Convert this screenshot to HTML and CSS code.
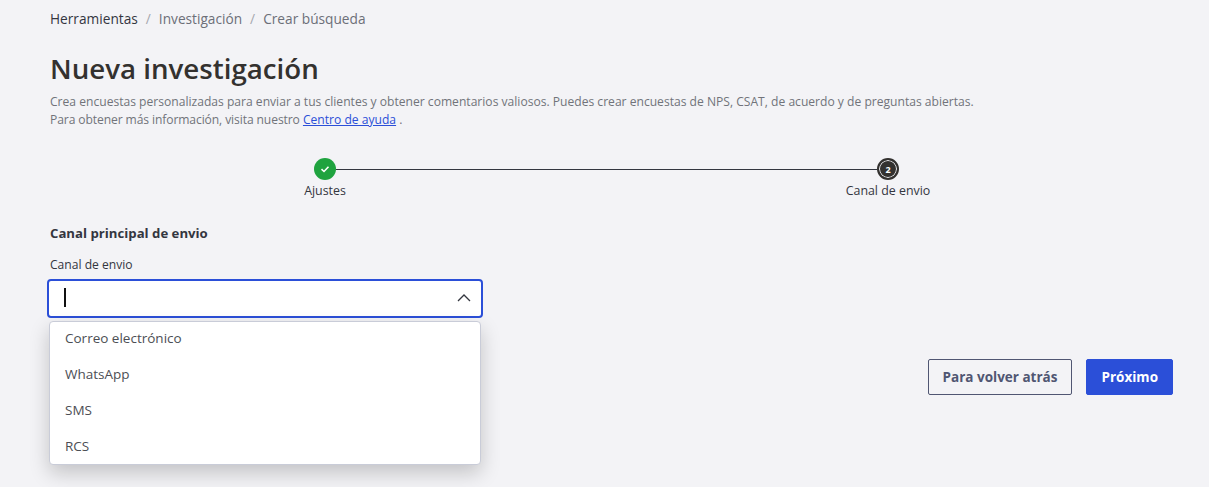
FILE: index.html
```html
<!DOCTYPE html>
<html lang="es">
<head>
  <meta charset="UTF-8" />
  <meta name="viewport" content="width=device-width, initial-scale=1.0"/>
  <title>Nueva investigación</title>
  <link rel="stylesheet" href="styles.css">
</head>
<body>

  <!-- Breadcrumb -->
  <nav class="breadcrumb">
    <a class="crumb-first" href="#">Herramientas</a>
    <span class="crumb-sep">/</span>
    <a href="#">Investigación</a>
    <span class="crumb-sep">/</span>
    <a href="#">Crear búsqueda</a>
  </nav>

  <!-- Header -->
  <h1>Nueva investigación</h1>
  <p class="intro">
    Crea encuestas personalizadas para enviar a tus clientes y obtener comentarios valiosos. Puedes crear encuestas de NPS, CSAT, de acuerdo y de preguntas abiertas.<br>
    <span class="intro-more">Para obtener más información, visita nuestro</span> <a href="#">Centro de ayuda</a> .
  </p>

  <!-- Stepper -->
  <div class="stepper">
    <div class="step">
      <span class="step-dot step-done">
        <svg width="10" height="10" viewBox="0 0 10 10"><path d="M1.5 5.2 4 7.5 8.5 2.8" fill="none" stroke="#fff" stroke-width="1.6"/></svg>
      </span>
      <span class="step-label">Ajustes</span>
    </div>
    <div class="step-line"></div>
    <div class="step">
      <span class="step-dot step-current">2</span>
      <span class="step-label">Canal de envio</span>
    </div>
  </div>

  <!-- Form -->
  <h2>Canal principal de envio</h2>
  <label class="field-label">Canal de envio</label>
  <div class="select">
    <div class="select-box">
      <span class="caret"></span>
      <svg class="chevron" width="14" height="8" viewBox="0 0 14 8"><path d="M1 7 7 1l6 6" fill="none" stroke="#33363f" stroke-width="1.3"/></svg>
    </div>
    <ul class="select-menu">
      <li>Correo electrónico</li>
      <li>WhatsApp</li>
      <li>SMS</li>
      <li>RCS</li>
    </ul>
  </div>

  <div class="actions">
    <button class="btn btn-outline" type="button">Para volver atrás</button>
    <button class="btn btn-primary" type="button">Próximo</button>
  </div>

</body>
</html>
```

FILE: styles.css
```css
* {
  box-sizing: border-box;
}

html, body {
  height: 100%;
}

body {
  margin: 0;
  padding: 0 36px 0 50px;
  overflow: hidden;
  font-family: 'Open Sans', 'Noto Sans', sans-serif;
  background-color: #f3f3f6;
  color: #33363f;
}

/* Breadcrumb */
.breadcrumb {
  display: flex;
  gap: 8px;
  height: 36px;
  align-items: center;
  font-size: 13.7px;
  color: #6c6f78;
}

.breadcrumb a {
  color: inherit;
  text-decoration: none;
}

.breadcrumb .crumb-first {
  color: #33363f;
}

.crumb-sep {
  color: #a5a7ae;
}

/* Header */
h1 {
  margin: 15px 0 0;
  font-size: 27.7px;
  line-height: 34px;
  font-weight: 600;
  color: #33312f;
}

.intro {
  margin: 8px 0 0;
  font-size: 12.1px;
  line-height: 18px;
  color: #71737a;
}

.intro-more {
  letter-spacing: -0.1px;
}

.intro a {
  color: #2b4fd8;
}

/* Stepper */
.stepper {
  display: flex;
  margin: 29px 0 0 225px;
  width: 663px;
}

.step {
  display: flex;
  flex-direction: column;
  align-items: center;
  width: 100px;
  flex: none;
  margin-right: -39px;
  margin-left: -39px;
}

.step:first-child {
  margin-left: 0;
}

.step:last-child {
  margin-right: 0;
}

.step-line {
  flex: 1;
  height: 1px;
  margin-top: 11px;
  background-color: #33363f;
}

.step-dot {
  display: flex;
  align-items: center;
  justify-content: center;
  width: 22px;
  height: 22px;
  border-radius: 50%;
}

.step-done {
  background-color: #1fa33f;
}

.step-current {
  background-color: #33312f;
  color: #fff;
  font-size: 9px;
  font-weight: 700;
  border: 2px solid #33312f;
  box-shadow: inset 0 0 0 1px #f3f3f6;
}

.step-label {
  margin-top: 1px;
  font-size: 12.4px;
  font-weight: 500;
  line-height: 20px;
  white-space: nowrap;
}

/* Form */
h2 {
  margin: 22px 0 0;
  font-size: 13.2px;
  line-height: 20px;
  font-weight: 700;
  color: #33363f;
}

.field-label {
  display: block;
  margin-top: 12px;
  font-size: 12.1px;
  line-height: 20px;
}

.select {
  position: relative;
  width: 436px;
  margin: 4px 0 0 -3px;
}

.select-box {
  display: flex;
  align-items: center;
  justify-content: space-between;
  height: 39px;
  padding: 0 10px 2px 15px;
  background-color: #fff;
  border: 2px solid #2b4fd8;
  border-radius: 4px;
}

.caret {
  width: 1.5px;
  height: 19px;
  background-color: #111;
}

.select-menu {
  position: absolute;
  top: 42px;
  left: 2px;
  right: 2px;
  margin: 0;
  padding: 0;
  list-style: none;
  background-color: #fff;
  border: 1px solid #c9ccd8;
  border-radius: 4px;
  box-shadow: 0 8px 20px rgba(0, 0, 0, 0.2);
}

.select-menu li {
  height: 36px;
  padding: 0 15px;
  display: flex;
  align-items: center;
  font-size: 13.5px;
  color: #4c4e54;
}

.select-menu li:first-child {
  height: 34px;
  padding-bottom: 2px;
}

/* Buttons */
.actions {
  display: flex;
  justify-content: flex-end;
  gap: 14px;
  margin-top: 41px;
}

.btn {
  height: 36px;
  border-radius: 2px;
  font-family: inherit;
  font-size: 13.5px;
  font-weight: 700;
  cursor: pointer;
}

.btn-outline {
  padding: 0 14px;
  background-color: transparent;
  border: 1px solid #505672;
  color: #505672;
}

.btn-primary {
  padding: 0 14px;
  background-color: #2b4fd8;
  border: 1px solid #2b4fd8;
  color: #fff;
}
```
